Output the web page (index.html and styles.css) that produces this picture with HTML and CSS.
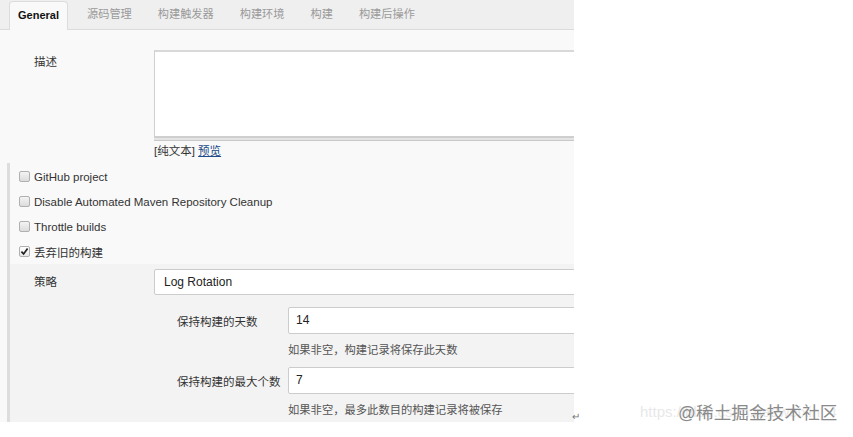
FILE: index.html
```html
<!DOCTYPE html>
<html lang="zh">
<head>
<meta charset="utf-8">
<title>Jenkins 配置</title>
<link rel="stylesheet" href="styles.css">
</head>
<body>
<div class="page">
  <div class="tabbar">
    <div class="tab active">General</div>
    <div class="tab">源码管理</div>
    <div class="tab">构建触发器</div>
    <div class="tab">构建环境</div>
    <div class="tab">构建</div>
    <div class="tab">构建后操作</div>
  </div>

  <div class="desc-row">
    <div class="label">描述</div>
    <div class="field">
      <div class="textarea"></div>
      <div class="handle"></div>
      <div class="preview">[纯文本] <a href="#" class="link">预览</a></div>
    </div>
  </div>

  <div class="section">
    <div class="checkrow"><span class="cb"></span><span>GitHub project</span></div>
    <div class="checkrow"><span class="cb"></span><span>Disable Automated Maven Repository Cleanup</span></div>
    <div class="checkrow"><span class="cb"></span><span>Throttle builds</span></div>
    <div class="checkrow"><span class="cb checked"><svg viewBox="0 0 11 11" width="11" height="11"><path d="M2.4 5.6 L4.6 7.9 L8.6 2.6" fill="none" stroke="#222" stroke-width="1.7"/></svg></span><span>丢弃旧的构建</span></div>

    <div class="nested">
      <div class="strategy-row">
        <div class="slabel">策略</div>
        <div class="select">Log Rotation</div>
      </div>
      <div class="sub-row">
        <div class="sublabel">保持构建的天数</div>
        <div class="input">14</div>
      </div>
      <div class="help">如果非空，构建记录将保存此天数</div>
      <div class="sub-row second">
        <div class="sublabel">保持构建的最大个数</div>
        <div class="input">7</div>
      </div>
      <div class="help">如果非空，最多此数目的构建记录将被保存</div>
    </div>
  </div>
</div>
<div class="return-mark">↵</div>
<div class="watermark-url">https://blog.csdn.net/weixin_4</div>
<div class="watermark">@稀土掘金技术社区</div>
</body>
</html>
```

FILE: styles.css
```css
* { box-sizing: border-box; }

body {
  margin: 0;
  background: #ffffff;
  font-family: "Liberation Sans", Arial, "Noto Sans CJK SC", sans-serif;
  font-size: 11.5px;
  color: #333;
  width: 853px;
  height: 437px;
  overflow: hidden;
  position: relative;
}

.page {
  width: 574px;
  height: 422px;
  background: #f9f9f9;
  overflow: hidden;
}

.tabbar {
  height: 30px;
  background: #efefef;
  border-bottom: 1px solid #dcdcdc;
  display: flex;
  align-items: flex-end;
  padding-left: 9px;
}

.tab {
  flex: none;
  height: 28px;
  line-height: 27px;
  padding: 0 13px;
  color: #9a9a9a;
  font-size: 11.2px;
}

.tab.active {
  width: 59px;
  padding: 0;
  text-align: center;
  margin-right: 6px;
  margin-bottom: -1px;
  height: 29px;
  background: #f9f9f9;
  border: 1px solid #dcdcdc;
  border-bottom: none;
  border-radius: 4px 4px 0 0;
  color: #111;
  font-weight: bold;
  font-size: 11px;
}

.desc-row {
  display: flex;
  padding-top: 20px;
}

.label {
  flex: none;
  width: 154px;
  padding-left: 34px;
  line-height: 14px;
  padding-top: 5px;
}

.field {
  flex: 1;
  min-width: 0;
}

.textarea {
  width: 440px;
  height: 87px;
  background: #fff;
  border: 1px solid #cfcfcf;
  border-top: 2px solid #d8d8d8;
}

.handle {
  width: 440px;
  height: 4px;
  background: #e4e4e4;
  border-top: 1px solid #cfcfcf;
  border-bottom: 1px solid #c8c8c8;
}

.preview {
  margin-top: 3px;
  line-height: 14px;
  height: 14px;
  color: #333;
}

.link {
  color: #204a87;
  text-decoration: underline;
}

.section {
  margin-top: 5px;
  margin-left: 7px;
  border-left: 3px solid #dddddd;
  padding-top: 1px;
}

.checkrow {
  height: 25px;
  display: flex;
  align-items: center;
  padding-left: 9px;
}

.cb {
  flex: none;
  width: 11px;
  height: 11px;
  border: 1px solid #b0b0b0;
  border-radius: 2px;
  background: linear-gradient(#f4f4f4, #dcdcdc);
  margin-right: 4px;
  display: flex;
  align-items: center;
  justify-content: center;
}

.cb.checked { background: linear-gradient(#ffffff, #e8e8e8); }

.cb svg { display: block; flex: none; }

.nested {
  background: #f3f3f3;
  padding-top: 5px;
  padding-bottom: 6px;
}

.strategy-row {
  display: flex;
  align-items: center;
}

.slabel {
  flex: none;
  width: 144px;
  padding-left: 24px;
  padding-bottom: 2px;
}

.select {
  flex: none;
  width: 440px;
  height: 26px;
  line-height: 24px;
  background: #fff;
  border: 1px solid #cccccc;
  border-radius: 2px;
  padding-left: 9px;
  font-size: 12px;
  color: #222;
}

.sub-row {
  display: flex;
  align-items: center;
  margin-top: 12px;
}

.sub-row.second { margin-top: 10px; }

.sublabel {
  flex: none;
  width: 278px;
  padding-left: 167px;
  white-space: nowrap;
}

.input {
  flex: none;
  width: 330px;
  height: 27px;
  line-height: 25px;
  background: #fff;
  border: 1px solid #cccccc;
  border-radius: 2px;
  padding-left: 7px;
  font-size: 12px;
  color: #222;
}

.help {
  margin-top: 9px;
  padding-left: 278px;
  line-height: 14px;
  height: 14px;
  color: #555;
  font-size: 11.3px;
}

.return-mark {
  position: absolute;
  left: 572px;
  top: 411px;
  font-size: 10px;
  color: #777;
}

.watermark-url {
  position: absolute;
  left: 640px;
  top: 403px;
  font-size: 15px;
  color: #e8e8e8;
  white-space: nowrap;
}

.watermark {
  position: absolute;
  left: 678px;
  top: 399px;
  font-size: 17.5px;
  color: #8a8a8a;
  white-space: nowrap;
  letter-spacing: 0.2px;
}
```
